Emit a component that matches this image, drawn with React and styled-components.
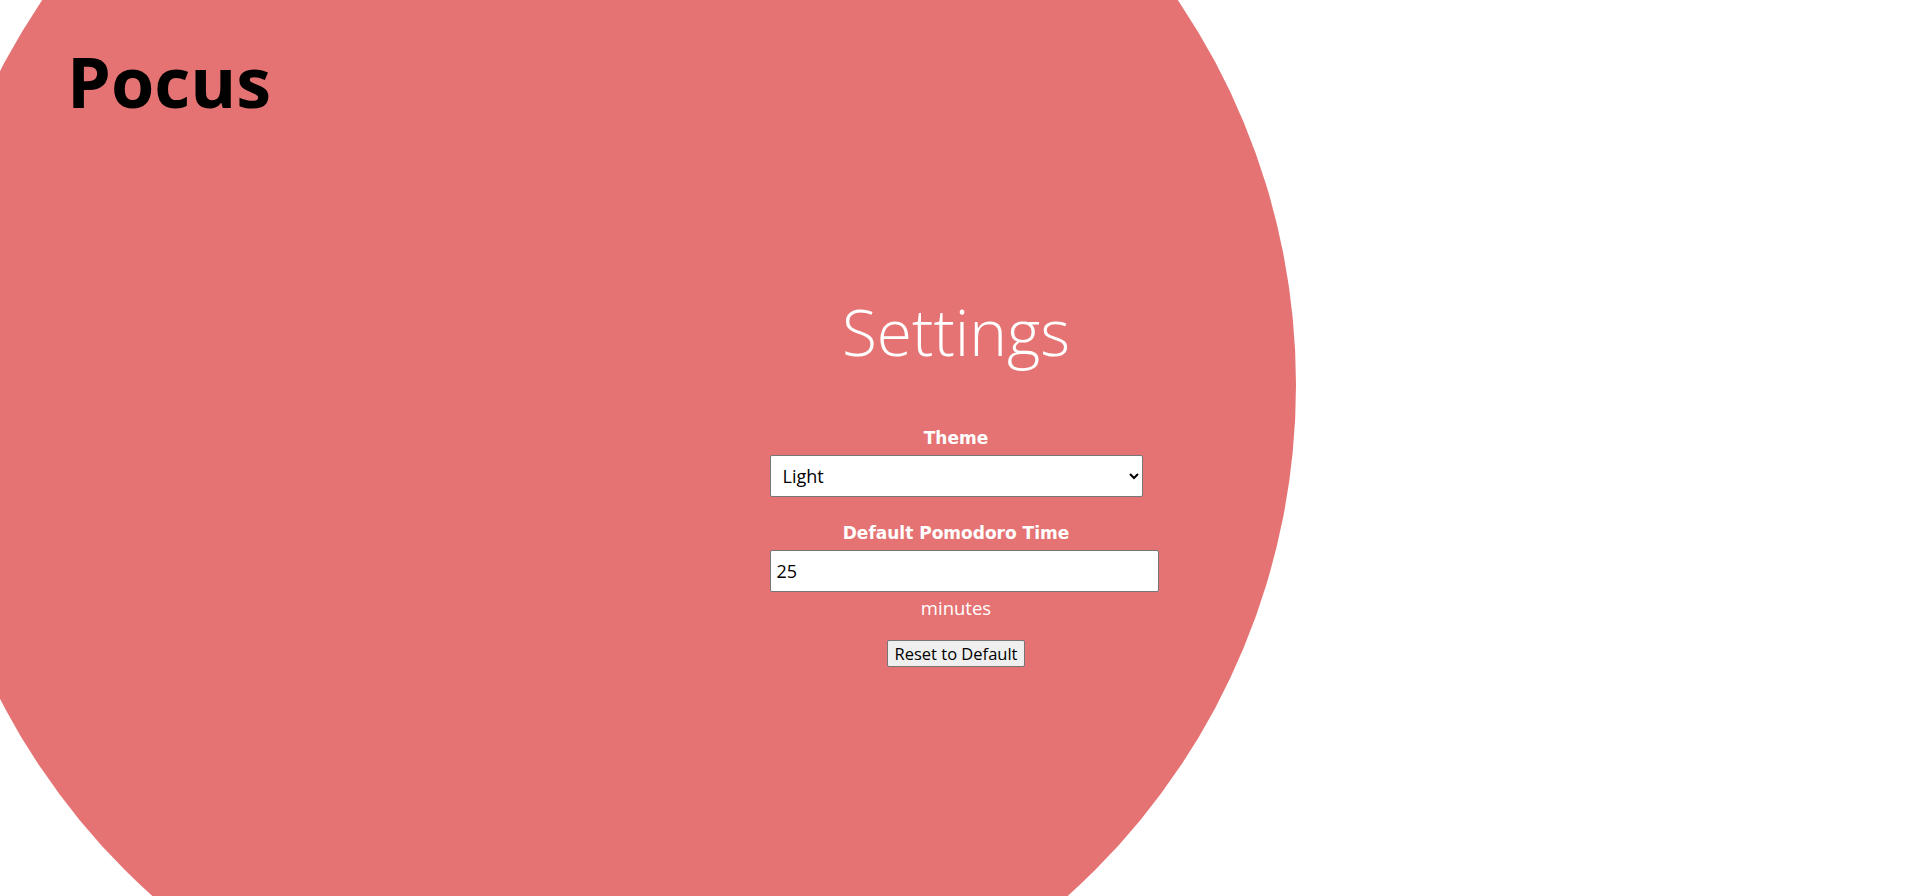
import styled, { createGlobalStyle } from "styled-components";
import { useState } from "react";

const GlobalStyle = createGlobalStyle`
  html, body {
    margin: 0;
    padding: 0;
    background: #ffffff;
  }
  body {
    font-family: "Open Sans", "Noto Sans", Arial, sans-serif;
  }
`;

const App = () => {
  const [theme, setTheme] = useState("light");
  const [minutes, setMinutes] = useState(25);

  return (
    <Page>
      <GlobalStyle />
      <Blob />
      <Header>
        <Logo>Pocus</Logo>
      </Header>
      <Main>
        <Title>Settings</Title>
        <Form>
          <Label htmlFor="theme">Theme</Label>
          <Select
            id="theme"
            value={theme}
            onChange={(e) => setTheme(e.target.value)}
          >
            <option value="light">Light</option>
            <option value="dark">Dark</option>
          </Select>
          <Label htmlFor="pomodoro" spaced>
            Default Pomodoro Time
          </Label>
          <NumberInput
            id="pomodoro"
            type="text"
            value={minutes}
            onChange={(e) => setMinutes(e.target.value)}
          />
          <Unit>minutes</Unit>
          <ResetButton
            onClick={() => {
              setTheme("light");
              setMinutes(25);
            }}
          >
            Reset to Default
          </ResetButton>
        </Form>
      </Main>
    </Page>
  );
};

export default App;

const Page = styled.div`
  position: relative;
  height: 100vh;
  overflow: hidden;
  background: #ffffff;
`;

// decorative circle sitting behind everything
const Blob = styled.div`
  position: absolute;
  left: -76px;
  top: -301px;
  width: 1372px;
  height: 1372px;
  border-radius: 50%;
  background: #e57373;
  z-index: 0;
`;

const Header = styled.header`
  position: relative;
  z-index: 1;
  padding: 46px 0 0 67px;
`;

const Logo = styled.h1`
  margin: 0;
  font-family: "Open Sans", "Noto Sans", sans-serif;
  font-size: 70px;
  font-weight: 700;
  line-height: 1;
  color: #000000;
`;

const Main = styled.main`
  position: relative;
  z-index: 1;
  display: flex;
  flex-direction: column;
  align-items: center;
  padding-top: 184px;
`;

const Title = styled.h2`
  margin: 0;
  font-family: "Open Sans", "Noto Sans", sans-serif;
  font-size: 64px;
  font-weight: 300;
  line-height: 1;
  color: #ffffff;
`;

const Form = styled.div`
  width: 373px;
  margin-top: 63px;
  display: flex;
  flex-direction: column;
  align-items: flex-start;
  text-align: center;
`;

const Label = styled.label`
  align-self: stretch;
  margin: ${({ spaced }) => (spaced ? "25px 0 6px" : "0 0 6px")};
  font-family: "DejaVu Sans", "Open Sans", sans-serif;
  font-size: 17px;
  font-weight: 700;
  line-height: 1.3;
  color: #ffffff;
`;

const Select = styled.select`
  width: 373px;
  height: 42px;
  box-sizing: border-box;
  padding: 0 8px;
  font-family: "Open Sans", "Noto Sans", sans-serif;
  font-size: 18px;
  color: #000000;
  background: #ffffff;
  border: 1px solid #767676;
  border-radius: 2px;
`;

const NumberInput = styled.input`
  width: 389px;
  height: 42px;
  box-sizing: border-box;
  padding: 0 6px;
  font-family: "Open Sans", "Noto Sans", sans-serif;
  font-size: 18px;
  color: #000000;
  background: #ffffff;
  border: 1px solid #767676;
  border-radius: 2px;
`;

const Unit = styled.span`
  align-self: stretch;
  margin-top: 5px;
  font-size: 18.5px;
  line-height: 1.2;
  color: #ffffff;
`;

const ResetButton = styled.button`
  align-self: center;
  margin-top: 21px;
  height: 27px;
  padding: 0 7px;
  font-family: "Open Sans", "Noto Sans", sans-serif;
  font-size: 16.5px;
  color: #000000;
  background: #efefef;
  border: 1px solid #767676;
  border-radius: 2px;
`;
